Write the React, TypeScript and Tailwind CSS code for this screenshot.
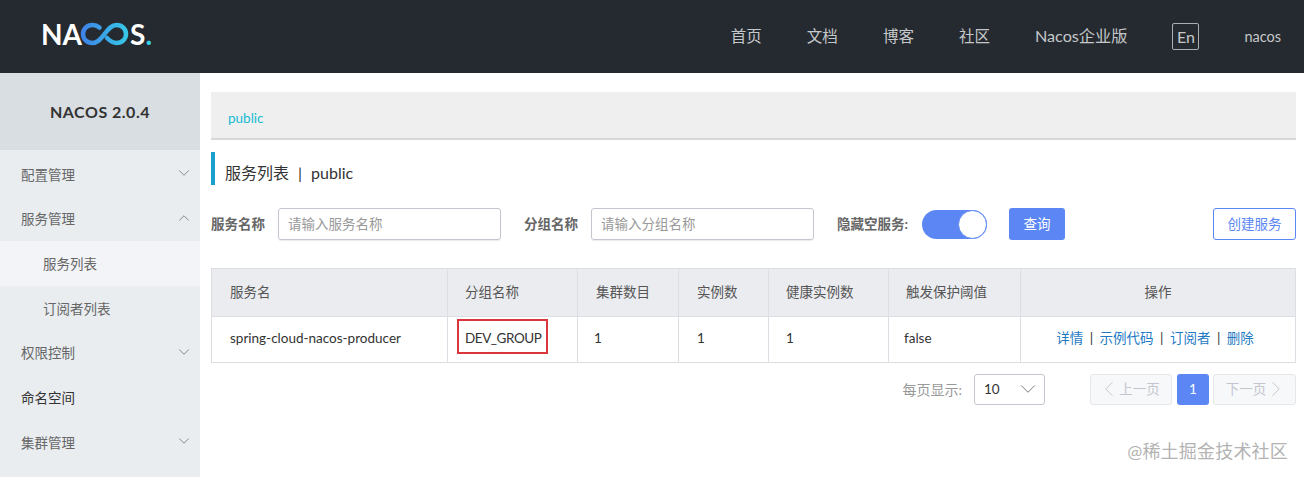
import React from "react";
import { ChevronDown, ChevronLeft, ChevronRight, ChevronUp } from "lucide-react";

const FONT = "[font-family:'Lato','Noto_Sans_CJK_SC',sans-serif]";

const navLinks = ["首页", "文档", "博客", "社区"];

const menu = [
  { label: "配置管理", arrow: "down" },
  { label: "服务管理", arrow: "up" },
  { label: "服务列表", sub: true, active: true },
  { label: "订阅者列表", sub: true },
  { label: "权限控制", arrow: "down" },
  { label: "命名空间", dark: true },
  { label: "集群管理", arrow: "down" },
];

const columns = [
  { title: "服务名", cls: "w-[236px] pl-[18px]", cell: "pl-[18px]", value: "spring-cloud-nacos-producer" },
  { title: "分组名称", cls: "w-[130px] pl-[17px]", cell: "pl-[17px] tracking-[-0.45px]", value: "DEV_GROUP" },
  { title: "集群数目", cls: "w-[101px] pl-[18px]", cell: "pl-[16px]", value: "1" },
  { title: "实例数", cls: "w-[90px] pl-[18px]", cell: "pl-[18px]", value: "1" },
  { title: "健康实例数", cls: "w-[120px] pl-[17px]", cell: "pl-[17px]", value: "1" },
  { title: "触发保护阈值", cls: "w-[132px] pl-[17px]", cell: "pl-[15px]", value: "false" },
];

const Logo = () => (
  <div className="flex items-center mb-[6px] -ml-[2px] text-white font-['Lato',sans-serif] font-bold text-[28px] leading-none">
    <span>NA</span>
    <svg width="53" height="24" viewBox="0 0 52 24" fill="none" className="-ml-[3px] -mr-[2px]">
      <defs>
        <linearGradient id="nacos-loop" x1="0" y1="0" x2="52" y2="0" gradientUnits="userSpaceOnUse">
          <stop offset="0" stopColor="#3f7fe8" />
          <stop offset="1" stopColor="#35cfe6" />
        </linearGradient>
      </defs>
      <path
        d="M20 5.500C17.500 3.500 15.500 3 13 3 7.500 3 3.500 7 3.500 12S7.500 21 13 21c4.500 0 7.500-3 12-9 4.500-6 7.500-9 12-9 5.500 0 9.500 4 9.500 9s-4 9-9.500 9c-4 0-7-2.500-9.500-5"
        stroke="url(#nacos-loop)"
        strokeWidth="4.5"
        strokeLinecap="round"
      />
    </svg>
    <span>S</span>
    <span className="text-[#35cfe6]">.</span>
  </div>
);

const Header = () => (
  <header className="h-[73px] bg-[#252a30] flex items-center pl-[43px] pr-[23px] shrink-0">
    <Logo />
    <nav className="ml-auto flex items-center text-[15.5px] text-[#c5c8ca]">
      {navLinks.map((link) => (
        <span key={link} className="mr-[45px]">
          {link}
        </span>
      ))}
      <span className="text-[16.2px]">Nacos企业版</span>
      <span className="ml-[45px] w-[27px] h-[27px] border border-[#aaaeb1] rounded-[2px] flex items-center justify-center text-[16px]">
        En
      </span>
      <span className="ml-[45px] text-[14.5px]">nacos</span>
    </nav>
  </header>
);

const Sidebar = () => (
  <aside className="w-[200px] shrink-0 bg-[#e9edf0] self-stretch">
    <div className="h-[77px] bg-[#d9dee2] flex items-center justify-center font-bold text-[16px] text-[#333] tracking-[0.5px]">
      NACOS 2.0.4
    </div>
    <ul className="text-[13.5px] pt-[2px]">
      {menu.map((item) => (
        <li
          key={item.label}
          className={`h-[44.7px] flex items-center pr-[7px] ${item.sub ? "pl-[43px]" : "pl-[21px]"} ${
            item.active ? "bg-[#f2f4f7]" : ""
          } ${item.dark ? "text-[#333]" : "text-[#666]"}`}
        >
          <span className="mt-[1px]">{item.label}</span>
          {item.arrow === "down" && <ChevronDown size={18} strokeWidth={0.9} className="ml-auto -mt-[3px] text-[#555]" />}
          {item.arrow === "up" && <ChevronUp size={18} strokeWidth={0.9} className="ml-auto -mt-[3px] text-[#555]" />}
        </li>
      ))}
    </ul>
  </aside>
);

const SearchField = ({ label, placeholder, width }: { label: string; placeholder: string; width: string }) => (
  <>
    <span className="text-[13.5px] font-bold text-[#666] whitespace-nowrap">{label}</span>
    <div
      className={`${width} h-[32px] ml-[13px] px-[9px] flex items-center border border-[#c4c6cf] rounded-[3px] shadow-[0_1px_1px_rgba(0,0,0,0.08)] text-[13.5px] text-[#999]`}
    >
      {placeholder}
    </div>
  </>
);

const Toolbar = () => (
  <div className="flex items-center mt-[23px] h-[32px]">
    <SearchField label="服务名称" placeholder="请输入服务名称" width="w-[223px]" />
    <div className="ml-[23px] flex items-center">
      <SearchField label="分组名称" placeholder="请输入分组名称" width="w-[223px]" />
    </div>
    <span className="ml-[23px] text-[13.5px] font-bold text-[#666] whitespace-nowrap">隐藏空服务:</span>
    <div className="ml-[14px] w-[65px] h-[29px] rounded-full bg-[#5b86f4] relative">
      <span className="absolute right-0 top-0 w-[29px] h-[29px] rounded-full bg-white border border-[#5b86f4]" />
    </div>
    <button className="ml-[22px] w-[56px] h-[32px] rounded-[3px] bg-[#5b86f4] text-white text-[13.5px]">查询</button>
    <button className="ml-auto w-[83px] h-[32px] rounded-[3px] border border-[#5b86f4] text-[#5b86f4] text-[13.5px] bg-white">
      创建服务
    </button>
  </div>
);

const ServiceTable = () => (
  <table className="mt-[28px] w-[1085px] table-fixed border-collapse text-[13.5px] text-[#333] border border-[#dcdee3]">
    <thead>
      <tr className="h-[48px] bg-[#ebecf0] text-[#555]">
        {columns.map((col) => (
          <th key={col.title} className={`${col.cls} font-normal text-left border border-[#dcdee3]`}>
            {col.title}
          </th>
        ))}
        <th className="font-normal text-center border border-[#dcdee3]">操作</th>
      </tr>
    </thead>
    <tbody>
      <tr className="h-[46px]">
        {columns.map((col) => (
          <td key={col.title} className={`${col.cell} pb-[2px] border border-[#dcdee3] relative`}>
            {col.value}
            {col.value === "DEV_GROUP" && (
              <span className="absolute left-[9px] top-[2px] w-[91px] h-[35px] border-2 border-[#d9363e]" />
            )}
          </td>
        ))}
        <td className="text-center pb-[2px] pr-[6px] border border-[#dcdee3] text-[#1f7ac4]">
          详情<span className="text-[#333] mx-[6.5px]">|</span>示例代码<span className="text-[#333] mx-[6.5px]">|</span>订阅者
          <span className="text-[#333] mx-[6.5px]">|</span>删除
        </td>
      </tr>
    </tbody>
  </table>
);

const Pagination = () => (
  <div className="flex items-center justify-end mt-[10px] h-[32px] text-[13.5px]">
    <span className="text-[#999] text-[14px]">每页显示:</span>
    <div className="ml-[12px] w-[71px] h-[31px] pl-[9px] pr-[3px] flex items-center justify-between border border-[#c4c6cf] rounded-[3px] text-[#333]">
      10
      <ChevronDown size={26} strokeWidth={0.8} className="text-[#666]" />
    </div>
    <div className="ml-[45px] w-[82px] h-[31px] flex items-center justify-center border border-[#e6e7eb] rounded-[3px] bg-[#f7f8fa] text-[#c4c6cf]">
      <ChevronLeft size={26} strokeWidth={0.9} className="-ml-[6px] -mr-[3px]" />
      上一页
    </div>
    <div className="ml-[5px] w-[32px] h-[31px] flex items-center justify-center rounded-[3px] bg-[#5b86f4] text-white">1</div>
    <div className="ml-[4px] w-[83px] h-[31px] flex items-center justify-center border border-[#e6e7eb] rounded-[3px] bg-[#f7f8fa] text-[#c4c6cf]">
      下一页
      <ChevronRight size={26} strokeWidth={0.9} className="-ml-[3px] -mr-[6px]" />
    </div>
  </div>
);

export default function App() {
  return (
    <div className={`${FONT} relative w-[1304px] h-[477px] overflow-hidden bg-white flex flex-col`}>
      <Header />
      <div className="flex flex-1 min-h-0">
        <Sidebar />
        <main className="flex-1 pl-[11px] pr-[8px] pt-[19px]">
          <div className="h-[48px] bg-[#efefef] border-b-2 border-[#d8d8d8] pl-[17px] pt-[16px] text-[13.5px] leading-[20px] text-[#16bcd4]">
            public
          </div>
          <div className="mt-[12px] h-[33px] border-l-[4px] border-[#1a9fcf] pl-[10px] pt-[8px] flex items-center text-[16px] text-[#333]">
            服务列表<span className="mx-[9px]">|</span>public
          </div>
          <Toolbar />
          <ServiceTable />
          <Pagination />
        </main>
      </div>
      <span className="absolute right-[16px] top-[438px] text-[18px] text-[#b3b3b3] tracking-[0.2px]">@稀土掘金技术社区</span>
    </div>
  );
}
